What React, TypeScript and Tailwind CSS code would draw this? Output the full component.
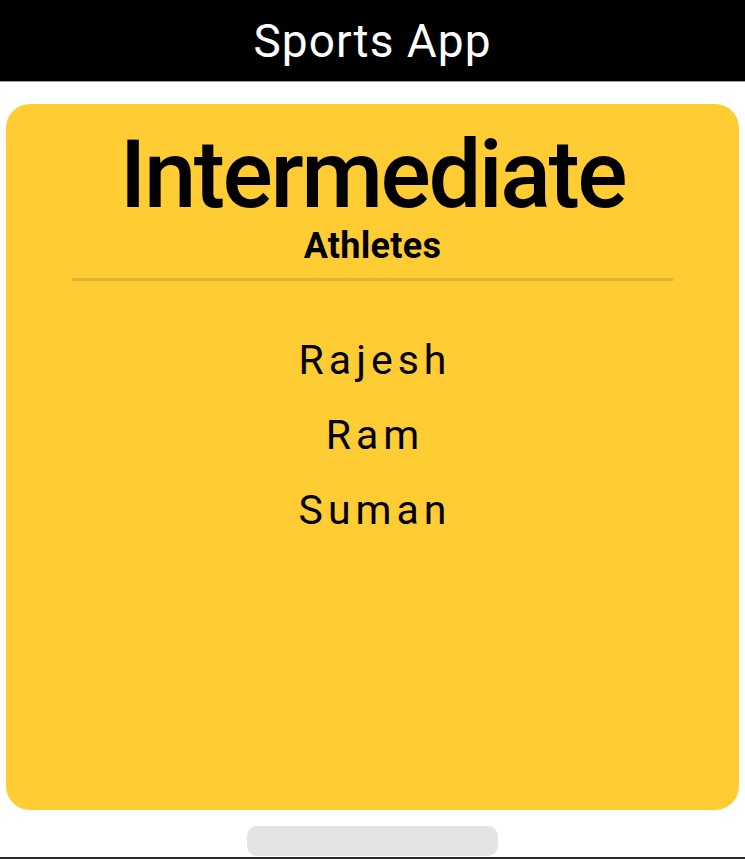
const athletes = ['Rajesh', 'Ram', 'Suman']

export default function App() {
  return (
    <div
      className="w-[745px] h-[859px] bg-white flex flex-col overflow-hidden"
      style={{ fontFamily: 'Roboto, "Noto Sans", sans-serif' }}
    >
      <header className="h-[82px] shrink-0 bg-black border-b border-[#9e9e9e] flex items-center justify-center">
        <h1 className="text-white text-[46px] leading-none tracking-[1px] mt-[1px]">Sports App</h1>
      </header>

      <main className="px-[6px] pt-[22px] shrink-0">
        <div className="h-[706px] bg-[#ffcc33] rounded-[24px] flex flex-col items-center pt-[24px]">
          <h2 className="text-black text-[94px] font-medium leading-[94px] tracking-[-2.5px]">
            Intermediate
          </h2>
          <div className="text-black text-[36px] font-bold leading-none mt-[6px] tracking-[0.3px]">Athletes</div>
          <div className="w-[601px] h-[3px] bg-[#e0b52e] mt-[14px]" />

          <ul className="flex flex-col items-center mt-[58px] gap-[32px]">
            {athletes.map(a => (
              <li key={a} className="text-black text-[41px] leading-[43px] tracking-[5px] pl-[5px]">
                {a}
              </li>
            ))}
          </ul>
        </div>
      </main>

      <div className="flex justify-center mt-[16px]">
        <div className="w-[251px] h-[30px] bg-[#e4e4e4] rounded-[10px]" />
      </div>
      <div className="mt-[1px] h-[3px] bg-[#2b2b2b]" />
    </div>
  )
}
